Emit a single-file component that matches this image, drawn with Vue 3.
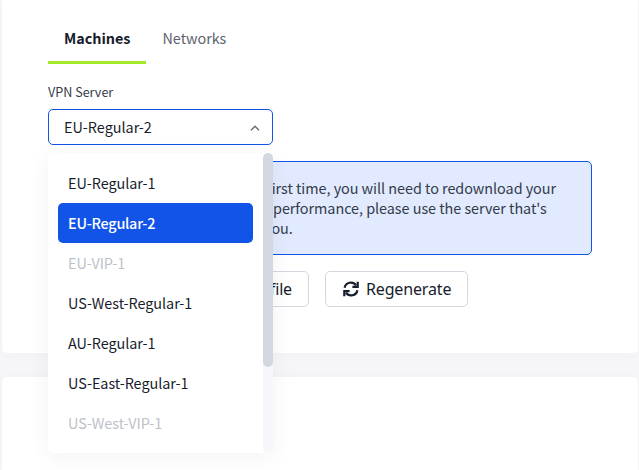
<script setup>
import { ref } from 'vue'

const selected = ref('EU-Regular-2')
const servers = [
  { name: 'EU-Regular-1' },
  { name: 'EU-Regular-2' },
  { name: 'EU-VIP-1', full: true },
  { name: 'US-West-Regular-1' },
  { name: 'AU-Regular-1' },
  { name: 'US-East-Regular-1' },
  { name: 'US-West-VIP-1', full: true },
]
const choose = (s) => {
  if (!s.full) selected.value = s.name
}
</script>

<template>
  <main class="page">
    <section class="card main-card">
      <nav class="tabs">
        <a class="tab active"><span>Machines</span></a>
        <a class="tab"><span>Networks</span></a>
      </nav>
      <label class="label">VPN Server</label>
      <div class="select">
        <div class="control">
          <span>{{ selected }}</span>
          <svg class="chevron" viewBox="0 0 10 6"><path d="M1 5.2 5 1.2 9 5.2" /></svg>
        </div>
        <div class="menu">
          <ul class="options">
            <li
              v-for="s in servers"
              :key="s.name"
              class="option"
              :class="{ chosen: s.name === selected, disabled: s.full }"
              @click="choose(s)"
            >{{ s.name }}</li>
          </ul>
          <div class="track"><div class="thumb"></div></div>
        </div>
      </div>
      <div class="notice">
        <p class="line one">first time, you will need to redownload your</p>
        <p class="line two">performance, please use the server that's</p>
        <p class="line three">you.</p>
      </div>
      <div class="buttons">
        <button class="btn file">file</button>
        <button class="btn regen">
          <svg class="sync" viewBox="0 0 16 16">
            <path d="M1.6 6.8A6.3 6.3 0 0 1 13 4.4M14.4 9.2A6.3 6.3 0 0 1 3 11.6" />
            <path d="M14.7.8V5.8H9.4M1.3 15.2V10.2H6.6" />
          </svg>
          <span>Regenerate</span>
        </button>
      </div>
    </section>
    <section class="card next-card"></section>
  </main>
</template>

<style>
body {
  margin: 0;
  overflow: hidden;
}
</style>

<style scoped>
* {
  box-sizing: border-box;
}
.page {
  width: 639px;
  height: 470px;
  overflow: hidden;
  padding: 0 1px 0 2px;
  display: flex;
  flex-direction: column;
  gap: 24px;
  background: #f6f6f9;
  font-family: "Noto Sans CJK SC", "Noto Sans", sans-serif;
  color: #171c2b;
}
.card {
  background: #fff;
  box-shadow: 0 0 16px rgba(20, 20, 40, 0.025);
}
.main-card {
  height: 353px;
  flex: none;
  padding: 14px 46px 0;
  border-radius: 0 0 5px 5px;
  position: relative;
  z-index: 1;
}
.next-card {
  flex: 1;
  border-radius: 5px 5px 0 0;
}
.tabs {
  display: flex;
  height: 50px;
}
.tab {
  height: 50px;
  line-height: 47px;
  padding: 0 16.5px;
  font-size: 14.4px;
  letter-spacing: -0.04px;
  color: #5d636e;
}
.tab.active {
  width: 98px;
  padding: 0 16px;
  font-weight: 700;
  color: #171c2b;
  border-bottom: 3px solid #a3ea2a;
}
.label {
  display: block;
  margin-top: 18px;
  height: 27px;
  line-height: 20px;
  font-size: 12.6px;
  color: #343b49;
}
.select {
  position: relative;
  width: 225px;
}
.control {
  height: 36px;
  line-height: 34px;
  border: 1px solid #1254e8;
  border-radius: 5px;
  padding: 0 12px 0 15px;
  display: flex;
  align-items: center;
  justify-content: space-between;
  font-size: 14.4px;
}
.chevron {
  width: 10px;
  height: 6px;
  margin-top: 2px;
  fill: none;
  stroke: #626b7c;
  stroke-width: 1.4;
}
.menu {
  position: absolute;
  z-index: 5;
  top: 44px;
  left: 0;
  width: 225px;
  height: 300px;
  display: flex;
  background: #fff;
  border-radius: 5px;
  box-shadow: 0 4px 22px rgba(20, 40, 40, 0.055);
}
.options {
  list-style: none;
  margin: 0;
  padding: 10px;
  width: 215px;
}
.option {
  height: 40px;
  line-height: 40px;
  padding: 0 10px;
  border-radius: 5px;
  font-size: 14.4px;
  letter-spacing: -0.04px;
  white-space: nowrap;
}
.option.chosen {
  background: #1254e8;
  color: #fff;
  font-weight: 500;
  letter-spacing: -0.25px;
}
.option.disabled {
  color: #bcc1c9;
}
.track {
  width: 10px;
  border-radius: 5px;
  background: #f7f7fb;
}
.thumb {
  height: 214px;
  border-radius: 5px;
  background: #d3d7df;
}
.notice {
  margin-top: 16px;
  width: 544px;
  height: 94px;
  padding: 16px 0 0 219px;
  border: 1px solid #1254e8;
  border-radius: 5px;
  background: #e1eaff;
  color: #343b49;
}
.line {
  margin: 0;
  height: 20px;
  line-height: 20px;
  font-size: 14.4px;
  letter-spacing: -0.04px;
  white-space: nowrap;
}
.one {
  margin-left: -1px;
}
.two {
  padding-left: 5px;
}
.three {
  margin-left: -4px;
}
.buttons {
  display: flex;
  gap: 16px;
  margin-top: 16px;
}
.btn {
  height: 36px;
  border: 1px solid #d3d7df;
  border-radius: 5px;
  background: #fff;
  color: #171c2b;
  font: 16px "Noto Sans", sans-serif;
  letter-spacing: -0.15px;
  display: flex;
  align-items: center;
  padding: 0 16px;
}
.file {
  width: 261px;
  justify-content: flex-end;
}
.regen {
  width: 143px;
  gap: 7px;
  padding-left: 17px;
}
.sync {
  width: 16px;
  height: 16px;
  flex: none;
  fill: none;
  stroke: #171c2b;
  stroke-width: 2.2;
}
</style>
